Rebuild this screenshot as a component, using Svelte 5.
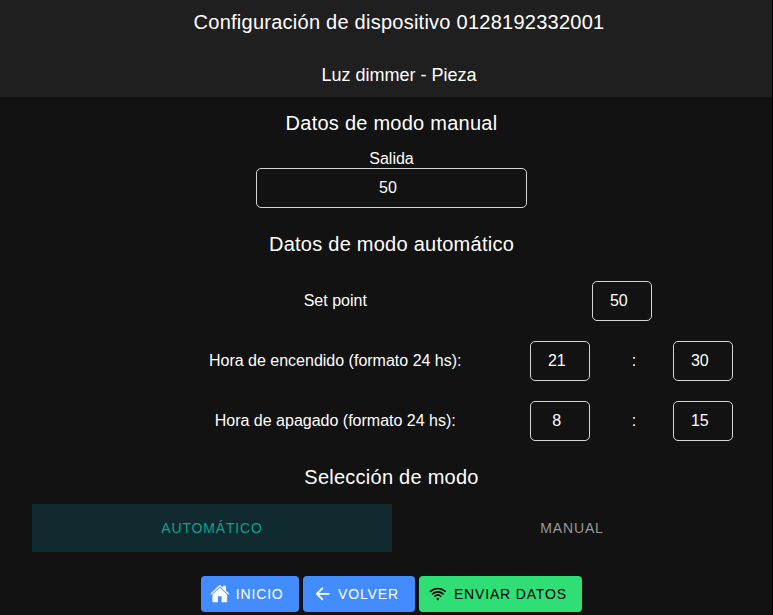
<script>
  let output = $state(50);
  let setPoint = $state(50);
  let mode = $state('auto');
  let schedule = $state([
    { label: 'Hora de encendido (formato 24 hs):', hour: 21, minute: 30 },
    { label: 'Hora de apagado (formato 24 hs):', hour: 8, minute: 15 }
  ]);
</script>

<div class="page">
  <header>
    <h1>Configuración de dispositivo 0128192332001</h1>
    <p>Luz dimmer - Pieza</p>
  </header>

  <main>
    <h2 class="manual-title">Datos de modo manual</h2>
    <label class="output">
      <span>Salida</span>
      <input bind:value={output} />
    </label>

    <h2 class="auto-title">Datos de modo automático</h2>
    <div class="row">
      <span class="label">Set point</span>
      <div class="single"><input bind:value={setPoint} /></div>
    </div>
    {#each schedule as item}
      <div class="row">
        <span class="label">{item.label}</span>
        <div class="time">
          <input bind:value={item.hour} />
          <span>:</span>
          <input bind:value={item.minute} />
        </div>
      </div>
    {/each}

    <h2 class="mode-title">Selección de modo</h2>
    <div class="segment">
      <button class:active={mode === 'auto'} onclick={() => (mode = 'auto')}>AUTOMÁTICO</button>
      <button class:active={mode === 'manual'} onclick={() => (mode = 'manual')}>MANUAL</button>
    </div>

    <div class="actions">
      <button>
        <svg viewBox="0 0 512 512" fill="currentColor">
          <path d="M261.56 101.28a8 8 0 00-11.06 0L66.4 277.15a8 8 0 00-2.47 5.79L63.9 448a32 32 0 0032 32H192a16 16 0 0016-16V328a8 8 0 018-8h80a8 8 0 018 8v136a16 16 0 0016 16h96.06a32 32 0 0032-32V282.94a8 8 0 00-2.47-5.79z" />
          <path d="M490.91 244.15l-74.8-71.56V64a16 16 0 00-16-16h-48a16 16 0 00-16 16v32l-57.92-55.38C272.77 35.14 264.71 32 256 32c-8.68 0-16.72 3.14-22.14 8.63l-212.7 203.5c-6.22 6-7 15.87-1.34 22.37A16 16 0 0043 267.56L250.5 69.28a8 8 0 0111.06 0l207.52 198.28a16 16 0 0022.59-.44c6.14-6.36 5.63-16.86-.76-22.97z" />
        </svg>
        INICIO
      </button>
      <button>
        <svg viewBox="0 0 512 512" fill="none" stroke="currentColor" stroke-width="48" stroke-linecap="round" stroke-linejoin="round">
          <path d="M244 400L100 256l144-144M120 256h292" />
        </svg>
        VOLVER
      </button>
      <button class="send">
        <svg viewBox="0 0 512 512" fill="currentColor">
          <path d="M346.65 304.3a136 136 0 00-180.71 0 21 21 0 1027.91 31.38 94 94 0 01124.89 0 21 21 0 0027.91-31.4z" />
          <path d="M256.28 183.7a221.47 221.47 0 00-151.8 59.92 21 21 0 1028.68 30.67 180.28 180.28 0 01246.24 0 21 21 0 1028.68-30.67 221.47 221.47 0 00-151.8-59.92z" />
          <path d="M462 175.86a309 309 0 00-411.44 0 21 21 0 1028 31.29 267.4 267.4 0 01355.43 0 21 21 0 0028-31.31z" />
          <circle cx="256.28" cy="393.41" r="32" />
        </svg>
        ENVIAR DATOS
      </button>
    </div>
  </main>
</div>

<style>
  :global(body) {
    background: #000;
  }
  .page {
    box-sizing: border-box;
    width: 772px;
    height: 615px;
    overflow: hidden;
    background: #121212;
    color: #fff;
    font: 16px/20px 'Liberation Sans', Arial, sans-serif;
  }
  header {
    box-sizing: border-box;
    height: 97px;
    padding: 10px 0 0 26px;
    background: #1f1f1f;
    text-align: center;
  }
  h1,
  h2 {
    margin: 0;
    font-size: 20px;
    line-height: 24px;
    font-weight: 400;
    letter-spacing: 0.25px;
  }
  header p {
    margin: 31px 0 0;
    font-size: 18px;
  }
  main {
    padding: 14px 21px 0 32px;
    text-align: center;
  }
  .output {
    display: flex;
    flex-direction: column;
    align-items: center;
    margin-top: 14px;
  }
  .output span {
    line-height: 19px;
  }
  input {
    box-sizing: border-box;
    width: 60px;
    height: 40px;
    padding: 0 6.4px 0 0;
    border: 1px solid #d4d4d4;
    border-radius: 5px;
    background: transparent;
    color: inherit;
    font: inherit;
    text-align: center;
    outline: none;
  }
  .output input {
    width: 271px;
    padding-right: 7px;
  }
  .auto-title {
    margin: 24px 0 15px;
  }
  .row {
    display: flex;
    align-items: center;
    height: 60px;
  }
  .label {
    width: 286.5px;
    margin-left: 160px;
  }
  .single {
    margin-left: 113.5px;
  }
  .time {
    display: flex;
    align-items: center;
    margin-left: 51.5px;
  }
  .time span {
    width: 83px;
    padding-left: 5px;
    box-sizing: border-box;
  }
  .mode-title {
    margin-top: 14px;
  }
  .segment {
    display: flex;
    height: 48px;
    margin: 15px -1px 0 0;
  }
  button {
    border: 0;
    padding: 0;
    font: 14px/20px 'Liberation Sans', Arial, sans-serif;
    letter-spacing: 0.84px;
  }
  .segment button {
    flex: 1;
    background: transparent;
    color: #999;
  }
  .segment .active {
    background: #10292f;
    color: #0aa28f;
  }
  .actions {
    display: flex;
    justify-content: center;
    gap: 4px;
    margin-top: 24px;
  }
  .actions button {
    display: flex;
    align-items: center;
    height: 36px;
    padding: 0 15.4px 0 9.5px;
    border-radius: 4px;
    background: #428cff;
    color: #fff;
  }
  .actions button:nth-child(2) {
    padding-right: 15.9px;
  }
  .actions .send {
    background: #2fdf75;
    color: #000;
  }
  svg {
    width: 19.6px;
    height: 19.6px;
    margin-right: 6px;
  }
</style>
